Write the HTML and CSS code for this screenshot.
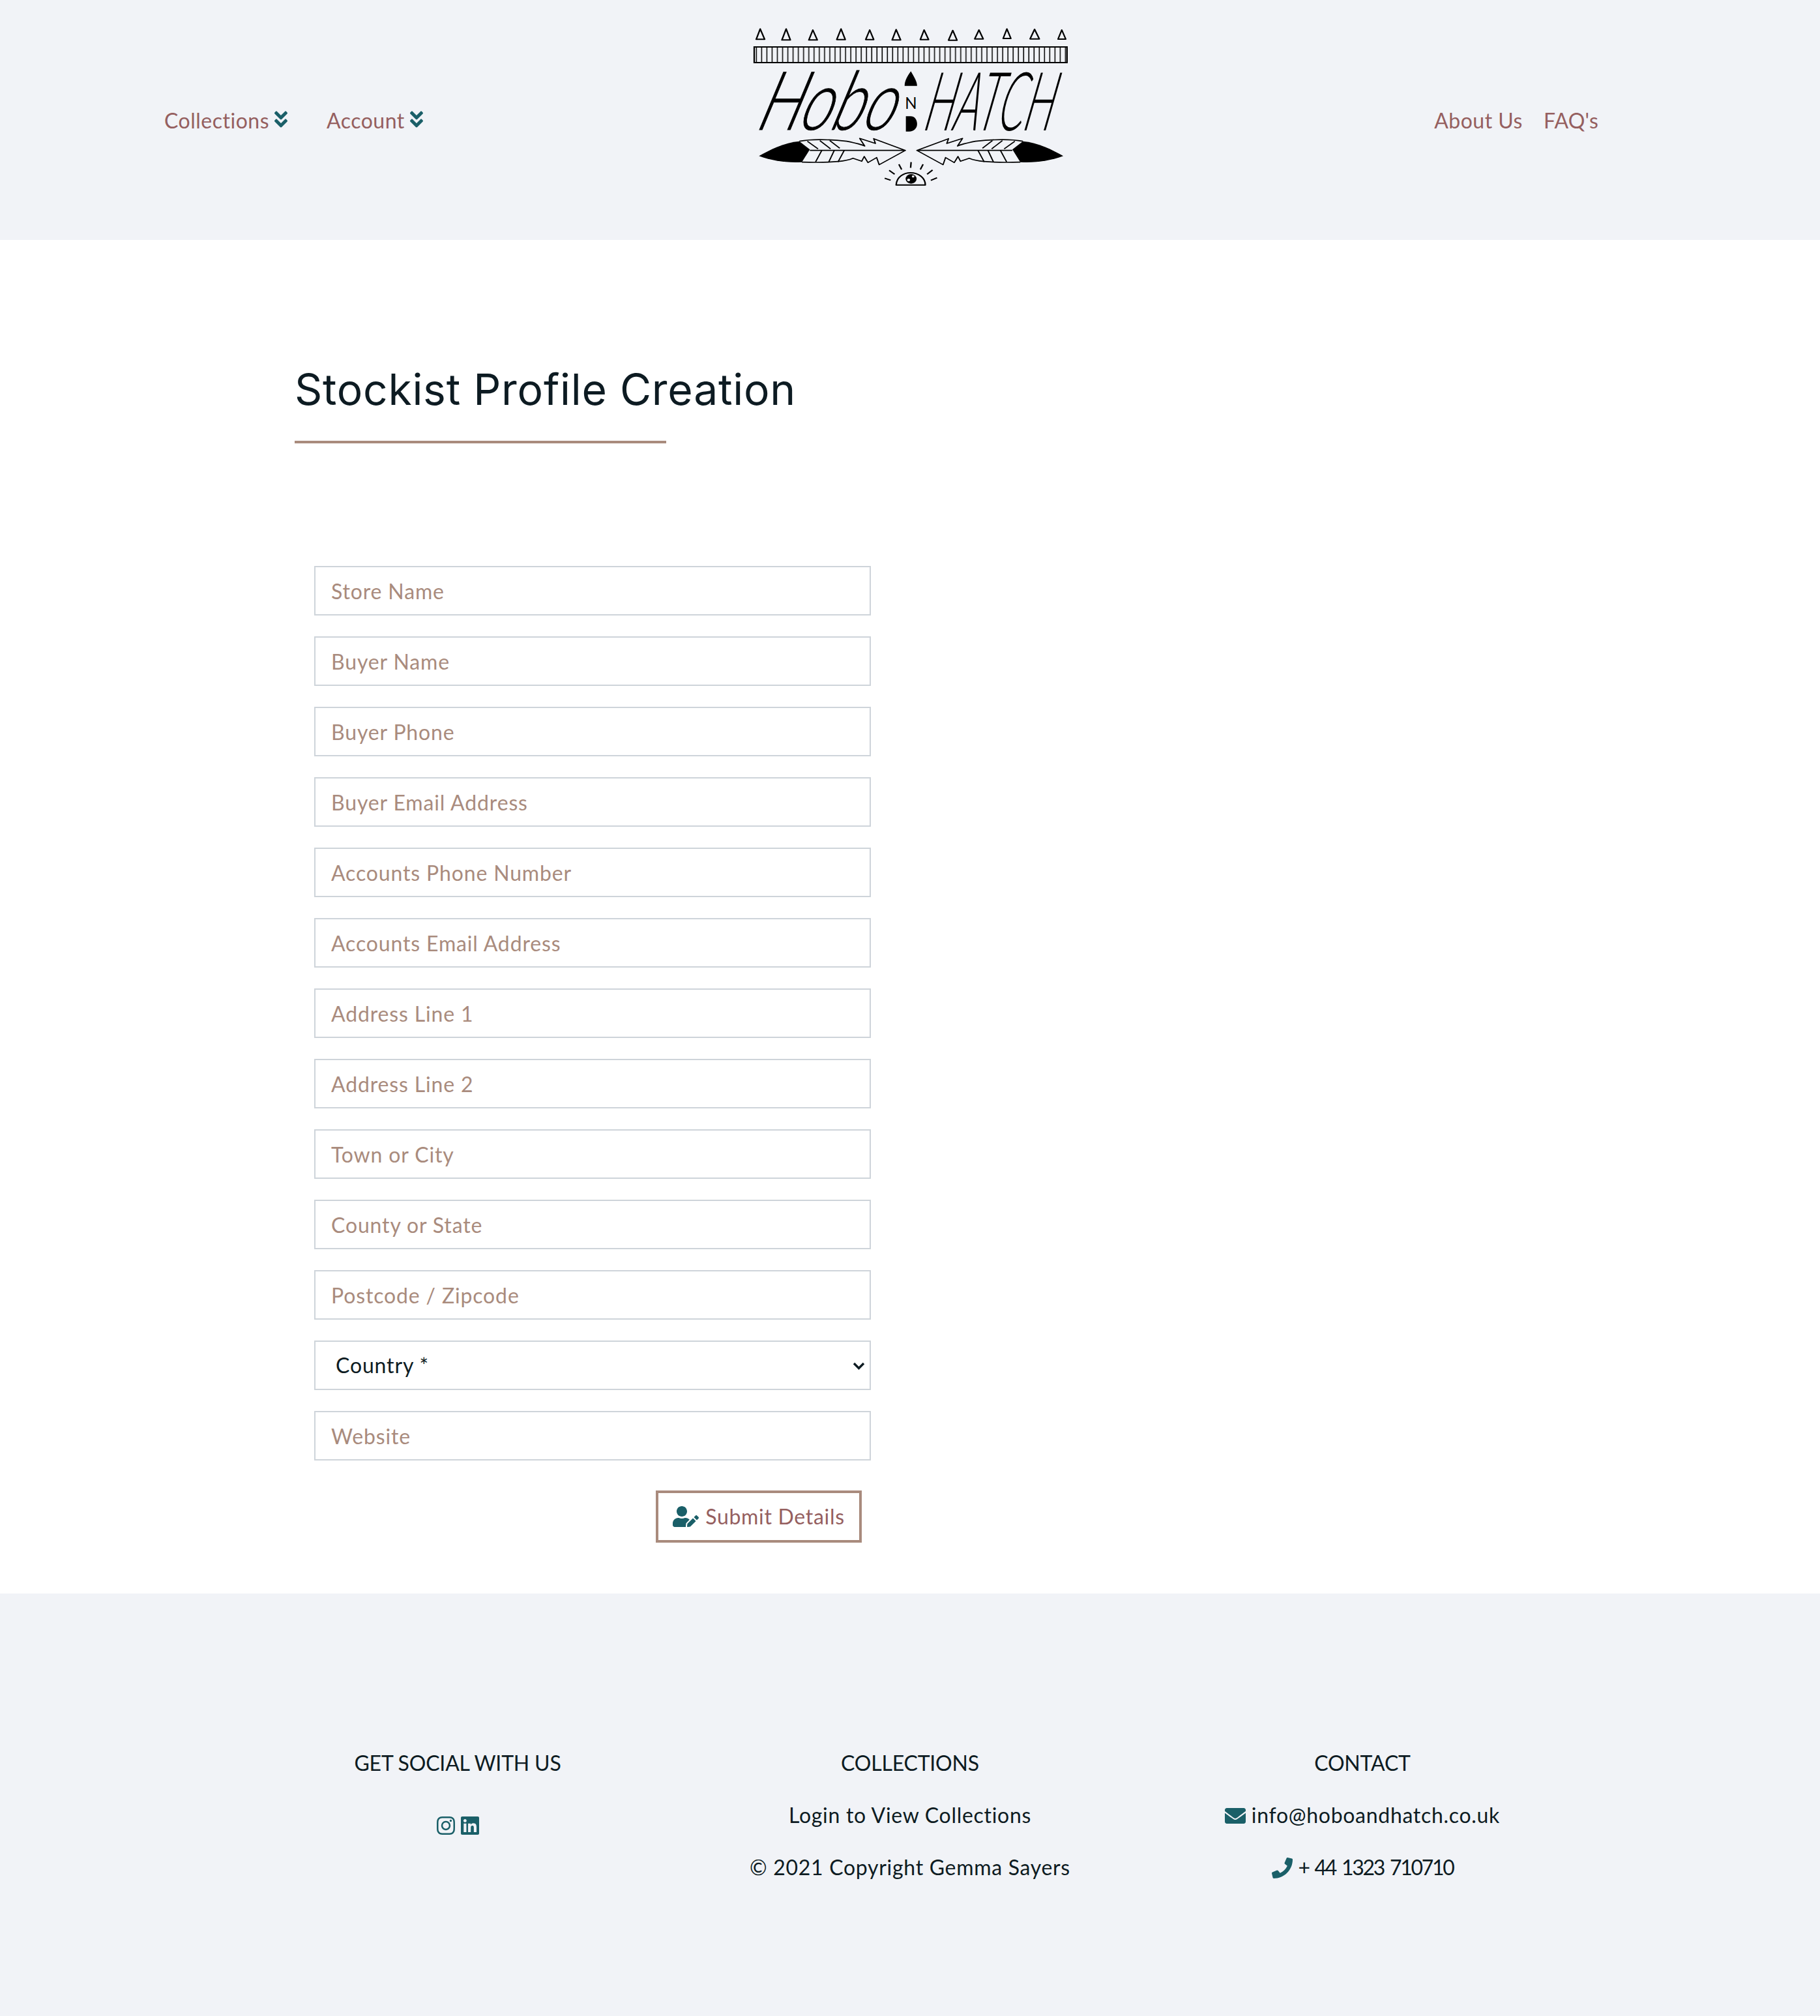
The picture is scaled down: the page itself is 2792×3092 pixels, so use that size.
FILE: index.html
```html
<!DOCTYPE html>
<html lang="en">
<head>
<meta charset="utf-8">
<title>Stockist Profile Creation</title>
<link rel="stylesheet" href="styles.css">
</head>
<body>
<svg class="defs" width="0" height="0" aria-hidden="true">
  <defs>
    <symbol id="i-chev" viewBox="0 0 320 512"><path d="M143 256.3L7 120.3c-9.4-9.4-9.4-24.6 0-33.9l22.6-22.6c9.4-9.4 24.6-9.4 33.9 0l96.4 96.4 96.4-96.4c9.4-9.4 24.6-9.4 33.9 0L313 86.3c9.4 9.4 9.4 24.6 0 33.9l-136 136c-9.4 9.5-24.6 9.5-34 .1zm34 192l136-136c9.4-9.4 9.4-24.6 0-33.9l-22.6-22.6c-9.4-9.4-24.6-9.4-33.9 0L160 352.1l-96.4-96.4c-9.4-9.4-24.6-9.4-33.9 0L7 278.3c-9.4 9.4-9.4 24.6 0 33.9l136 136c9.4 9.5 24.6 9.5 34 .1z"/></symbol>
    <pattern id="band" width="21" height="80" patternUnits="userSpaceOnUse" x="148"><path class="bar" d="M10 0V80"/></pattern>
    <g id="feather">
      <path class="lgf" d="M168 658C210 630 270 595 330 590L372 628L340 686C280 690 220 680 168 658Z"/>
      <path class="lg" d="M330 590C400 575 480 585 520 590C550 597 580 605 592 612L572 577L635 600L628 578L755 632H372M755 632L650 698L640 665L605 688L590 660L580 682L545 668C520 680 480 690 340 686"/>
      <path class="lg" d="M362 590L405 625M412 587L455 625M452 587L492 622M420 632L395 685M470 632L448 685M510 632L485 685"/>
    </g>
  </defs>
</svg>

<header class="site-header">
  <nav class="nav nav-left">
    <a class="nav-link" href="#">Collections <svg class="ic ic-chev"><use href="#i-chev"/></svg></a>
    <a class="nav-link" href="#">Account <svg class="ic ic-chev"><use href="#i-chev"/></svg></a>
  </nav>
  <a class="logo" href="#" aria-label="Hobo and Hatch">
    <svg class="logo-svg" viewBox="0 0 1568 870" preserveAspectRatio="none">
      <path class="lg thick" d="M173 73L157 121H191ZM277 73L260 124H294ZM384 78L368 124H402ZM497 73L480 122H514ZM612 78L596 122H628ZM718 76L702 124H736ZM830 78L815 122H848ZM945 80L928 125H962ZM1050 78L1033 119H1067ZM1162 73L1147 117H1178ZM1273 75L1255 119H1292ZM1382 78L1367 120H1398Z"/>
      <rect class="band" x="149" y="156" width="1254" height="72"/>
      <text class="logo-hobo" x="0" y="0" transform="translate(146 538) skewX(-20)" textLength="548" lengthAdjust="spacingAndGlyphs">Hobo</text>
      <path class="lgf" d="M777 268C760 295 752 315 752 335H802C802 315 790 295 777 268ZM757 475H775C795 475 802 495 802 510C802 530 790 545 770 545H757Z"/>
      <text class="logo-n" x="777" y="442" textLength="48" lengthAdjust="spacingAndGlyphs">N</text>
      <text class="logo-hatch" x="0" y="0" transform="translate(817 540) skewX(-14)" textLength="517" lengthAdjust="spacingAndGlyphs">HATCH</text>
      <use href="#feather"/>
      <use href="#feather" transform="translate(1556 0) scale(-1 1)"/>
      <path class="lg thick" d="M718 791C720 752 750 735 775 735C810 735 835 760 835 791Z"/>
      <circle class="lgf" cx="778" cy="763" r="22"/>
      <circle class="hole" cx="768" cy="768" r="6"/>
      <circle class="hole" cx="786" cy="752" r="5"/>
      <path class="lg thick" d="M672 760L696 769M690 724L712 742M729 696L740 720M778 686L776 712M826 696L815 720M864 722L842 742M882 758L857 770"/>
    </svg>
  </a>
  <nav class="nav nav-right">
    <a class="nav-link" href="#">About Us</a>
    <a class="nav-link nav-tight" href="#">FAQ's</a>
  </nav>
</header>

<main class="page">
  <h1 class="title">Stockist Profile Creation</h1>
  <div class="rule"></div>
  <form class="stockist-form">
    <input class="field" type="text" placeholder="Store Name">
    <input class="field" type="text" placeholder="Buyer Name">
    <input class="field" type="text" placeholder="Buyer Phone">
    <input class="field" type="text" placeholder="Buyer Email Address">
    <input class="field" type="text" placeholder="Accounts Phone Number">
    <input class="field" type="text" placeholder="Accounts Email Address">
    <input class="field" type="text" placeholder="Address Line 1">
    <input class="field" type="text" placeholder="Address Line 2">
    <input class="field" type="text" placeholder="Town or City">
    <input class="field" type="text" placeholder="County or State">
    <input class="field" type="text" placeholder="Postcode / Zipcode">
    <select class="field field-select"><option>Country *</option></select>
    <input class="field" type="text" placeholder="Website">
    <div class="actions">
      <button class="submit" type="button">
        <svg class="ic ic-user" viewBox="0 0 640 512"><path d="M224 256c70.7 0 128-57.3 128-128S294.7 0 224 0 96 57.3 96 128s57.3 128 128 128zm89.6 32h-16.7c-22.2 10.2-46.9 16-72.9 16s-50.6-5.8-72.9-16h-16.7C60.2 288 0 348.2 0 422.4V464c0 26.5 21.5 48 48 48h274.9c-2.4-6.8-3.4-14-2.6-21.3l6.8-60.9 1.2-11.1 7.9-7.9 77.3-77.3c-24.5-27.7-60-45.5-99.9-45.5zm45.3 145.3l-6.8 61c-1.1 10.2 7.5 18.8 17.6 17.6l60.9-6.8 137.9-137.9-71.7-71.7-138 137.8zM633 268.9L595.1 231c-9.3-9.3-24.5-9.3-33.8 0l-37.8 37.8-4.1 4.1 71.8 71.7 41.8-41.8c9.3-9.4 9.3-24.5 0-33.9z"/></svg>
        Submit Details
      </button>
    </div>
  </form>
</main>

<footer class="site-footer">
  <section class="foot-col">
    <h2 class="foot-title">GET SOCIAL WITH US</h2>
    <div class="social">
      <svg class="ic ic-social" viewBox="0 0 448 512"><path d="M224.1 141c-63.6 0-114.9 51.3-114.9 114.9s51.3 114.9 114.9 114.9S339 319.5 339 255.9 287.7 141 224.1 141zm0 189.6c-41.1 0-74.7-33.5-74.7-74.7s33.5-74.7 74.7-74.7 74.7 33.5 74.7 74.7-33.6 74.7-74.7 74.7zm146.4-194.3c0 14.9-12 26.8-26.8 26.8-14.9 0-26.8-12-26.8-26.8s12-26.8 26.8-26.8 26.8 12 26.8 26.8zm76.1 27.2c-1.7-35.9-9.9-67.7-36.2-93.9-26.2-26.2-58-34.4-93.9-36.2-37-2.1-147.9-2.1-184.9 0-35.8 1.7-67.6 9.9-93.9 36.1s-34.4 58-36.2 93.9c-2.1 37-2.1 147.9 0 184.9 1.7 35.9 9.9 67.7 36.2 93.9s58 34.4 93.9 36.2c37 2.1 147.9 2.1 184.9 0 35.9-1.7 67.7-9.9 93.9-36.2 26.2-26.2 34.4-58 36.2-93.9 2.1-37 2.1-147.8 0-184.8zM398.8 388c-7.8 19.6-22.9 34.7-42.6 42.6-29.5 11.7-99.5 9-132.1 9s-102.7 2.6-132.1-9c-19.6-7.8-34.7-22.9-42.6-42.6-11.7-29.5-9-99.5-9-132.1s-2.6-102.7 9-132.1c7.8-19.6 22.9-34.7 42.6-42.6 29.5-11.7 99.5-9 132.1-9s102.7-2.6 132.1 9c19.6 7.8 34.7 22.9 42.6 42.6 11.7 29.5 9 99.5 9 132.1s2.7 102.7-9 132.1z"/></svg>
      <svg class="ic ic-social" viewBox="0 0 448 512"><path d="M416 32H31.9C14.3 32 0 46.5 0 64.3v383.4C0 465.5 14.3 480 31.9 480H416c17.6 0 32-14.5 32-32.3V64.3c0-17.8-14.4-32.3-32-32.3zM135.4 416H69V202.2h66.5V416zm-33.2-243c-21.3 0-38.5-17.3-38.5-38.5S80.9 96 102.2 96c21.2 0 38.5 17.3 38.5 38.5 0 21.3-17.2 38.5-38.5 38.5zm282.1 243h-66.4V312c0-24.8-.5-56.7-34.5-56.7-34.6 0-39.9 27-39.9 54.9V416h-66.4V202.2h63.7v29.2h.9c8.9-16.8 30.6-34.5 62.9-34.5 67.2 0 79.7 44.3 79.7 101.9V416z"/></svg>
    </div>
  </section>
  <section class="foot-col">
    <h2 class="foot-title">COLLECTIONS</h2>
    <p class="foot-row">Login to View Collections</p>
    <p class="foot-row">© 2021 Copyright Gemma Sayers</p>
  </section>
  <section class="foot-col">
    <h2 class="foot-title">CONTACT</h2>
    <p class="foot-row"><svg class="ic ic-env" viewBox="0 0 512 512"><path d="M502.3 190.8c3.9-3.1 9.7-.2 9.7 4.7V400c0 26.5-21.5 48-48 48H48c-26.5 0-48-21.5-48-48V195.6c0-5 5.7-7.8 9.7-4.7 22.4 17.4 52.1 39.5 154.1 113.6 21.1 15.4 56.7 47.8 92.2 47.6 35.7.3 72-32.8 92.3-47.6 102-74.1 131.6-96.3 154-113.7zM256 320c23.2.4 56.6-29.2 73.4-41.4 132.7-96.3 142.8-104.7 173.4-128.7 5.8-4.5 9.2-11.5 9.2-18.9v-19c0-26.5-21.5-48-48-48H48C21.5 64 0 85.5 0 112v19c0 7.4 3.4 14.3 9.2 18.9 30.6 23.9 40.7 32.4 173.4 128.7 16.8 12.2 50.2 41.8 73.4 41.4z"/></svg> info@hoboandhatch.co.uk</p>
    <p class="foot-row foot-phone"><svg class="ic ic-env" viewBox="0 0 512 512"><path d="M493.4 24.6l-104-24c-11.3-2.6-22.9 3.3-27.5 13.9l-48 112c-4.2 9.8-1.4 21.3 6.9 28l60.6 49.6c-36 76.7-98.9 140.5-177.2 177.2l-49.6-60.6c-6.8-8.3-18.2-11.1-28-6.9l-112 48C3.9 366.5-2 378.1.6 389.4l24 104C27.1 504.2 36.7 512 48 512c256.1 0 464-207.5 464-464 0-11.2-7.7-20.9-18.6-23.4z"/></svg> <span class="phone-num">+ 44 1323 710710</span></p>
  </section>
</footer>
</body>
</html>
```

FILE: styles.css
```css
* { box-sizing: border-box; }
html, body { margin: 0; padding: 0; }
body {
  background: #fff;
  color: #0d1b22;
  font-family: Lato, "Noto Sans", sans-serif;
  font-size: 32px;
  line-height: 48px;
  letter-spacing: 0.7px;
}
.defs { position: absolute; }
.ic { fill: #1a5f68; display: inline-block; }

.site-header {
  background: #f1f3f7;
  height: 368px;
  display: grid;
  grid-template-columns: 1fr 600px 1fr;
  align-items: center;
  padding-left: 8px;
}
.nav { display: flex; align-items: center; }
.nav-left { gap: 60px; padding-left: 244px; }
.nav-right { gap: 32px; justify-content: flex-end; padding-right: 340px; }
.nav-link { color: #955f5f; text-decoration: none; display: flex; align-items: center; gap: 8px; letter-spacing: 0.5px; padding-top: 1px; }
.nav-tight { letter-spacing: 0.2px; }
.ic-chev { width: 20px; height: 32px; margin-top: -3px; }
.logo { display: block; align-self: start; margin-top: 20px; width: 600px; height: 290px; }
.logo-svg { display: block; width: 600px; height: 290px; }
.lg { fill: none; stroke: #000; stroke-width: 5; stroke-linejoin: round; }
.lg.thick { stroke-width: 6; }
.bar { fill: none; stroke: #000; stroke-width: 4; }
.lgf { fill: #000; }
.hole { fill: #f1f3f7; }
.band { fill: url(#band); stroke: #000; stroke-width: 6; }
.logo-hobo { font-family: Lato, sans-serif; font-weight: 300; font-size: 375px; fill: #000; stroke: #000; stroke-width: 3; letter-spacing: 0; }
.logo-n { font-family: Lato, sans-serif; font-size: 76px; fill: #000; text-anchor: middle; letter-spacing: 0; }
.logo-hatch { font-family: Lato, sans-serif; font-weight: 300; font-size: 375px; fill: #000; letter-spacing: 0; }

.page { padding: 191px 0 78px 452px; }
.title {
  margin: 0;
  font-family: Inter, sans-serif;
  font-weight: 400;
  font-size: 66px;
  line-height: 77px;
  letter-spacing: 0.72px;
}
.rule { width: 570px; height: 4px; background: #a98b7d; margin-top: 40px; }
.stockist-form { width: 854px; margin: 188px 0 0 30px; display: flex; flex-direction: column; gap: 32px; }
.field {
  display: block;
  width: 100%;
  height: 76px;
  padding: 0 24px;
  border: 2px solid #ced4da;
  border-radius: 0;
  background: #fff;
  font: inherit;
  letter-spacing: 0.85px;
  color: #0d1b22;
  outline: none;
}
.field::placeholder { color: #a98b7d; opacity: 1; }
.field-select {
  appearance: none;
  padding-left: 31px;
  background-image: url("data:image/svg+xml,%3Csvg xmlns='http://www.w3.org/2000/svg' viewBox='0 0 19 13'%3E%3Cpath d='M2 3l7.5 7.5L17 3' fill='none' stroke='%230d1b22' stroke-width='3.4'/%3E%3C/svg%3E");
  background-repeat: no-repeat;
  background-size: 19px 13px;
  background-position: right 7px center;
}
.actions { display: flex; justify-content: flex-end; padding-right: 14px; margin-top: 14px; }
.submit {
  width: 316px;
  height: 80px;
  border: 4px solid #a98b7d;
  background: #fff;
  color: #955f5f;
  font: inherit;
  letter-spacing: inherit;
  display: flex;
  align-items: center;
  justify-content: center;
  gap: 10px;
  padding: 0;
}
.ic-user { width: 40px; height: 32px; }

.site-footer {
  background: #f1f3f7;
  height: 648px;
  padding: 236px 355px 0;
  display: grid;
  grid-template-columns: repeat(3, 1fr);
  text-align: center;
}
.foot-title { margin: 0 0 32px; font-weight: 400; font-size: 32px; line-height: 48px; letter-spacing: -0.2px; }
.foot-row { margin: 0 0 32px; line-height: 48px; }
.phone-num { letter-spacing: -2.3px; word-spacing: 3px; }
.social { display: flex; justify-content: center; gap: 9px; padding-top: 24px; }
.ic-social { width: 28px; height: 32px; }
.ic-env { width: 32px; height: 32px; vertical-align: -5px; }
```
